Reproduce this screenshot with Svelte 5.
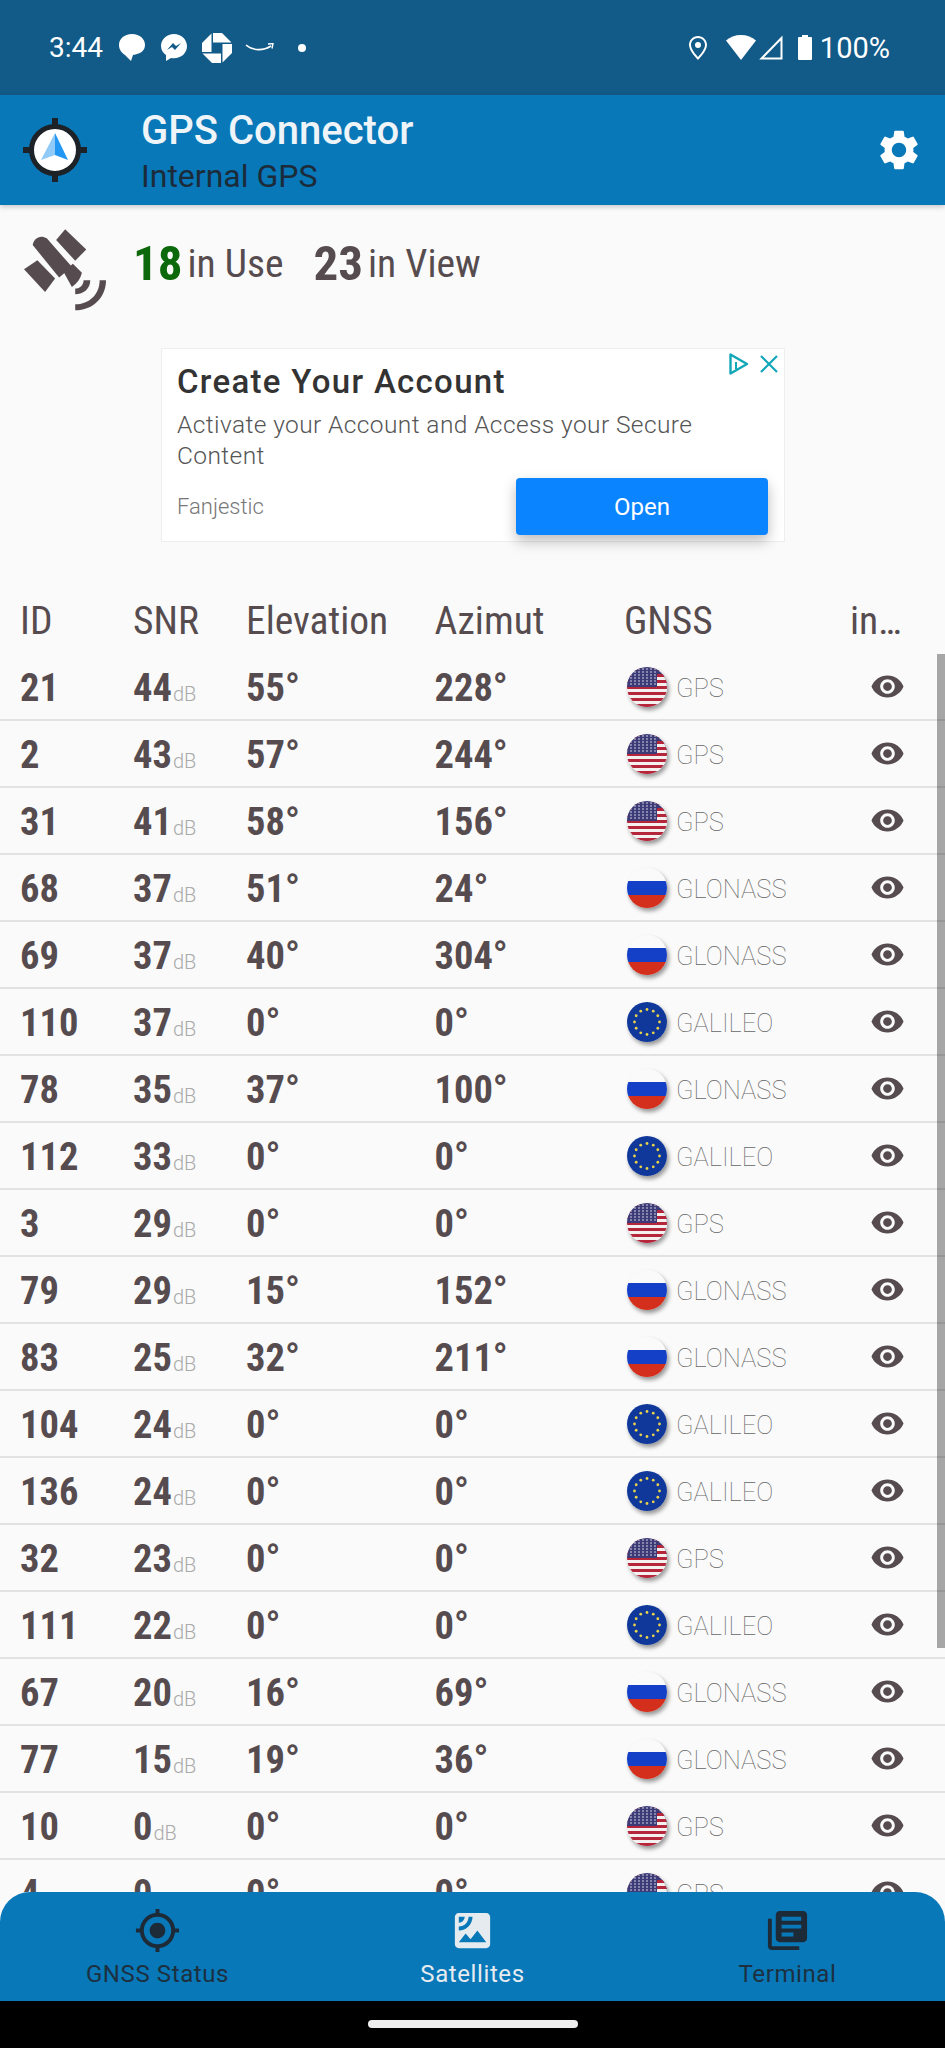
<script>
    const sats = [
        [21, 44, 55, 228, "GPS"],
        [2, 43, 57, 244, "GPS"],
        [31, 41, 58, 156, "GPS"],
        [68, 37, 51, 24, "GLONASS"],
        [69, 37, 40, 304, "GLONASS"],
        [110, 37, 0, 0, "GALILEO"],
        [78, 35, 37, 100, "GLONASS"],
        [112, 33, 0, 0, "GALILEO"],
        [3, 29, 0, 0, "GPS"],
        [79, 29, 15, 152, "GLONASS"],
        [83, 25, 32, 211, "GLONASS"],
        [104, 24, 0, 0, "GALILEO"],
        [136, 24, 0, 0, "GALILEO"],
        [32, 23, 0, 0, "GPS"],
        [111, 22, 0, 0, "GALILEO"],
        [67, 20, 16, 69, "GLONASS"],
        [77, 15, 19, 36, "GLONASS"],
        [10, 0, 0, 0, "GPS"],
        [4, 0, 0, 0, "GPS"],
    ];

    const euStars = Array.from({ length: 12 }, (_, i) => {
        const a = (i * Math.PI) / 6;
        return [20 + 12.5 * Math.cos(a), 20 + 12.5 * Math.sin(a)];
    });
    const usStripes = [0, 6, 12, 18, 24, 30, 36];
</script>

{#snippet flag(system)}
    <svg class="flag" viewBox="0 0 40 40">
        {#if system === "GPS"}
            <rect width="40" height="40" fill="#f4f0f0" />
            {#each usStripes as y}
                <rect x="0" y={y + 1} width="40" height="3" fill="#b5263a" />
            {/each}
            <rect width="40" height="20" fill="#3c3b78" />
            {#each [2, 5, 8, 11, 14, 17] as y}
                {#each [4, 8, 12, 16, 20, 24, 28] as x}
                    <circle cx={x} cy={y} r="0.8" fill="#e6e6f0" />
                {/each}
            {/each}
            <rect x="30" y="7" width="10" height="3" fill="#b5263a" />
            <rect x="30" y="13" width="10" height="3" fill="#b5263a" />
            <rect x="30" y="10" width="10" height="3" fill="#f4f0f0" />
            <rect x="30" y="16" width="10" height="3" fill="#f4f0f0" />
            <rect x="30" y="19" width="10" height="1" fill="#b5263a" />
        {:else if system === "GLONASS"}
            <rect width="40" height="14" fill="#fafafa" />
            <rect y="13" width="40" height="14" fill="#1440c8" />
            <rect y="27" width="40" height="13" fill="#d42f1c" />
        {:else}
            <rect width="40" height="40" fill="#10389a" />
            {#each euStars as [x, y]}
                <circle cx={x} cy={y} r="1.4" fill="#e8d24a" />
            {/each}
        {/if}
    </svg>
{/snippet}

<div class="screen">
    <div class="status">
        <span class="clock">3:44</span>
        <svg class="s-bubble" viewBox="0 0 26 27"><path d="M13 0C5 0 0 5 0 11c0 5 3 8 6 10l6 6 2-6c7-1 12-4 12-10C26 5 21 0 13 0z" fill="#fff" /></svg>
        <svg class="s-msg" viewBox="0 0 26 28"><path d="M13 0C6 0 0 5 0 12c0 4 2 7 5 9v6l5-3c1 .3 2 .3 3 .3 7 0 13-5 13-12S20 0 13 0z" fill="#fff" /><path d="M6 16l6-7 3 3 5-3-6 7-3-3z" fill="#125a87" /></svg>
        <svg class="s-chase" viewBox="0 0 30 30">
            <g fill="#fff">
                <path d="M11 0h9l9.500 9.500H11z" />
                <path d="M11 0h9l9.500 9.500H11z" transform="rotate(90 15 15)" />
                <path d="M11 0h9l9.500 9.500H11z" transform="rotate(180 15 15)" />
                <path d="M11 0h9l9.500 9.500H11z" transform="rotate(270 15 15)" />
            </g>
        </svg>
        <svg class="s-amazon" viewBox="0 0 29 10"><path d="M1 2c7 6 17 6 25 1" fill="none" stroke="#fff" stroke-width="1.6" /><path d="M23 1l5-.5-1 5" fill="none" stroke="#fff" stroke-width="1.4" /></svg>
        <span class="s-dot"></span>
        <span class="grow"></span>
        <svg class="s-pin" viewBox="0 0 18 24"><path fill-rule="evenodd" d="M9 0C4 0 0 4 0 9c0 6 9 15 9 15s9-9 9-15c0-5-4-9-9-9zm0 2c4 0 7 3 7 7 0 4-5 10-7 12-2-2-7-8-7-12 0-4 3-7 7-7zm0 4a3 3 0 1 0 0 6 3 3 0 0 0 0-6z" fill="#fff" /></svg>
        <svg class="s-wifi" viewBox="0 0 30 25"><path d="M15 0C9 0 4 2 0 5.500L15 25 30 5.500C26 2 21 0 15 0z" fill="#fff" /></svg>
        <svg class="s-signal" viewBox="0 0 24 25"><path d="M22.500 3v20.500H2.500z" fill="none" stroke="#fff" stroke-width="2" /></svg>
        <svg class="s-batt" viewBox="0 0 14 25"><path d="M4 0h6v2h3a1 1 0 0 1 1 1v21a1 1 0 0 1-1 1H1a1 1 0 0 1-1-1V3a1 1 0 0 1 1-1h3z" fill="#fff" /></svg>
        <span class="pct">100%</span>
    </div>

    <header class="bar">
        <svg class="logo" viewBox="0 0 70 70">
            <circle cx="35" cy="35" r="23.500" fill="#fff" stroke="#1d2228" stroke-width="5" />
            <path d="M32 3h6v9h-6zM32 58h6v9h-6zM3 32h9v6H3zM58 32h9v6h-9z" fill="#1d2228" />
            <path d="M35 18L21 45l14-5z" fill="#90caf9" />
            <path d="M35 18l13 27-13-5z" fill="#2196f3" />
        </svg>
        <div class="titles">
            <div class="title">GPS Connector</div>
            <div class="subtitle">Internal GPS</div>
        </div>
        <svg class="gear" viewBox="0 0 24 24"><path d="M19.140 12.940c.04-.3.060-.61.060-.94 0-.32-.020-.64-.070-.94l2.030-1.580a.49.49 0 0 0 .12-.61l-1.920-3.320a.488.488 0 0 0-.59-.22l-2.390.96c-.5-.38-1.030-.7-1.620-.94l-.36-2.540a.484.484 0 0 0-.48-.41h-3.840c-.24 0-.43.17-.47.41l-.36 2.540c-.59.24-1.130.57-1.620.94l-2.390-.96c-.22-.08-.47 0-.59.22L2.740 8.870c-.12.21-.08.47.12.61l2.030 1.580c-.05.3-.09.63-.09.94s.020.64.070.94l-2.030 1.580a.49.49 0 0 0-.12.61l1.920 3.320c.12.22.37.29.59.22l2.390-.96c.5.38 1.030.7 1.620.94l.36 2.540c.05.24.24.41.48.41h3.840c.24 0 .44-.17.47-.41l.36-2.540c.59-.24 1.130-.56 1.620-.94l2.390.96c.22.08.47 0 .59-.22l1.920-3.320c.12-.22.070-.47-.12-.61l-2.010-1.580zM12 15.600c-1.980 0-3.600-1.620-3.600-3.600s1.620-3.600 3.600-3.600 3.600 1.620 3.600 3.600-1.620 3.600-3.600 3.600z" fill="#fff" /></svg>
    </header>

    <main class="content">
        <div class="summary">
            <svg class="sat" viewBox="0 0 245 245">
                <g fill="#564c4f">
                    <path d="M123 1l63 60-33 34-57-62z" />
                    <path d="M0 120l40-27 53 55-30 40z" />
                    <path d="M26 48C28 30 48 15 68 28l75 85-38 32z" />
                    <path d="M118 128l28-24 27 27c-4 18-14 32-30 42z" />
                    <path d="M153 178c14 0 25-11 25-25h20c0 25-20 42-45 42z" />
                    <path d="M153 225c42 0 73-30 73-72h19c0 52-40 90-92 90z" />
                </g>
            </svg>
            <b class="in-use">18</b><span class="lbl">in Use</span>
            <b class="in-view">23</b><span class="lbl">in View</span>
        </div>

        <div class="ad">
            <svg class="ad-mark" viewBox="0 0 49 22">
                <path d="M1.500 1.500v19L18 11z" fill="none" stroke="#12a7b8" stroke-width="2.400" stroke-linejoin="round" />
                <path d="M7 9v7" stroke="#12a7b8" stroke-width="2" />
                <path d="M32 3l16 16M48 3L32 19" stroke="#12a7b8" stroke-width="2.200" />
            </svg>
            <div class="ad-title">Create Your Account</div>
            <div class="ad-text">Activate your Account and Access your Secure Content</div>
            <div class="ad-foot">
                <span class="ad-brand">Fanjestic</span>
                <span class="ad-open">Open</span>
            </div>
        </div>

        <div class="head row-grid">
            <span>ID</span>
            <span>SNR</span>
            <span>Elevation</span>
            <span>Azimut</span>
            <span>GNSS</span>
            <span>in…</span>
        </div>

        <div class="list">
            {#each sats as [id, snr, el, az, system]}
                <div class="row row-grid">
                    <b>{id}</b>
                    <span><b>{snr}</b><small>dB</small></span>
                    <b>{el}°</b>
                    <b>{az}°</b>
                    <span class="system">
                        {@render flag(system)}
                        <em>{system}</em>
                    </span>
                    <svg class="eye" viewBox="0 0 24 24"><path d="M12 4.500C7 4.500 2.730 7.610 1 12c1.730 4.390 6 7.500 11 7.500s9.270-3.110 11-7.500c-1.730-4.390-6-7.500-11-7.500zM12 17c-2.760 0-5-2.240-5-5s2.240-5 5-5 5 2.240 5 5-2.240 5-5 5zm0-8c-1.660 0-3 1.340-3 3s1.340 3 3 3 3-1.340 3-3-1.340-3-3-3z" fill="#564c4f" /></svg>
                </div>
            {/each}
            <div class="scrollbar"></div>
        </div>
    </main>

    <nav class="tabs">
        <div class="tab">
            <svg viewBox="0 0 24 24"><path d="M12 8c-2.210 0-4 1.790-4 4s1.790 4 4 4 4-1.790 4-4-1.790-4-4-4zm8.940 3A8.994 8.994 0 0 0 13 3.060V1h-2v2.060A8.994 8.994 0 0 0 3.060 11H1v2h2.060A8.994 8.994 0 0 0 11 20.940V23h2v-2.060A8.994 8.994 0 0 0 20.940 13H23v-2h-2.060zM12 19c-3.870 0-7-3.130-7-7s3.130-7 7-7 7 3.130 7 7-3.130 7-7 7z" fill="#1d2b38" /></svg>
            <span>GNSS Status</span>
        </div>
        <div class="tab active">
            <svg viewBox="0 0 24 24"><path d="M19 3H5c-1.100 0-2 .9-2 2v14c0 1.100.9 2 2 2h14c1.100 0 2-.9 2-2V5c0-1.100-.9-2-2-2zM5 4.990h3C8 6.650 6.650 8 5 8V4.990zM5 12v-2c2.760 0 5-2.250 5-5.010h2C12 8.860 8.870 12 5 12zm0 6l3.500-4.500 2.500 3.010L14.500 12l4.500 6H5z" fill="#e6ebef" /></svg>
            <span>Satellites</span>
        </div>
        <div class="tab">
            <svg viewBox="0 0 24 24"><path d="M4 6H2v14c0 1.100.9 2 2 2h14v-2H4V6zm16-4H8c-1.100 0-2 .9-2 2v12c0 1.100.9 2 2 2h12c1.100 0 2-.9 2-2V4c0-1.100-.9-2-2-2zm-1 9H9V9h10v2zm-4 4H9v-2h6v2zm4-8H9V5h10v2z" fill="#1d2b38" /></svg>
            <span>Terminal</span>
        </div>
    </nav>

    <div class="gesture"><span></span></div>
</div>

<style>
    :global(body) {
        margin: 0;
        background: #fafafa;
    }

    .screen {
        width: 945px;
        height: 2048px;
        display: flex;
        flex-direction: column;
        overflow: hidden;
        font-family: Roboto, "Liberation Sans", sans-serif;
        color: #564c4f;
    }

    /* status bar */
    .status {
        height: 95px;
        flex-shrink: 0;
        box-sizing: border-box;
        padding: 0 55px 0 49px;
        display: flex;
        align-items: center;
        background: #125a87;
        color: #fff;
        font-size: 28px;
    }

    .grow {
        flex-grow: 1;
    }

    .clock {
        width: 70px;
    }

    .s-bubble {
        width: 26px;
        height: 27px;
    }

    .s-msg {
        width: 26px;
        height: 28px;
        margin-left: 16px;
    }

    .s-chase {
        width: 30px;
        height: 30px;
        margin-left: 15px;
    }

    .s-amazon {
        width: 29px;
        height: 10px;
        margin-left: 13px;
    }

    .s-dot {
        width: 8px;
        height: 8px;
        margin-left: 24px;
        border-radius: 50%;
        background: #fff;
    }

    .s-pin {
        width: 18px;
        height: 24px;
    }

    .s-wifi {
        width: 30px;
        height: 25px;
        margin-left: 19px;
    }

    .s-signal {
        width: 24px;
        height: 25px;
        margin-left: 3px;
    }

    .s-batt {
        width: 14px;
        height: 25px;
        margin-left: 15px;
    }

    .pct {
        margin-left: 8px;
        font-size: 29px;
    }

    /* app bar */
    .bar {
        height: 110px;
        flex-shrink: 0;
        display: flex;
        align-items: center;
        background: #0878b9;
        box-shadow: 0 2px 5px #0003;
        position: relative;
    }

    .logo {
        width: 70px;
        height: 70px;
        margin-left: 20px;
    }

    .titles {
        margin-left: 51px;
        padding-top: 3px;
        flex-grow: 1;
    }

    .title {
        font-size: 40px;
        font-weight: 500;
        line-height: 50px;
        color: #eef4f8;
    }

    .subtitle {
        font-size: 32px;
        line-height: 41px;
        color: #1c2b3a;
    }

    .gear {
        width: 48px;
        height: 48px;
        margin-right: 22px;
    }

    /* summary */
    .content {
        flex-grow: 1;
        min-height: 0;
        overflow: hidden;
        background: #fafafa;
    }

    .summary {
        height: 110px;
        box-sizing: border-box;
        padding: 7px 0 0 24px;
        display: flex;
        align-items: center;
        font-family: "Roboto Condensed", "Liberation Sans Narrow", Roboto, sans-serif;
        font-stretch: condensed;
    }

    .sat {
        width: 82px;
        height: 82px;
        margin: 13px 27px 0 0;
    }

    .summary b {
        font-size: 49px;
    }

    .in-use {
        color: #0b680b;
    }

    .in-view {
        margin-left: 30px;
    }

    .lbl {
        margin-left: 5px;
        font-size: 39.500px;
    }

    /* ad */
    .ad {
        position: relative;
        width: 624px;
        height: 194px;
        box-sizing: border-box;
        margin: 33px auto 0 161px;
        padding: 12px 15px 0;
        background: #fff;
        border: 1px solid #eee;
    }

    .ad-mark {
        position: absolute;
        top: 4px;
        right: 6px;
        width: 49px;
        height: 22px;
    }

    .ad-title {
        font-size: 33px;
        font-weight: 500;
        line-height: 42px;
        letter-spacing: 1.300px;
        color: #333;
    }

    .ad-text {
        width: 545px;
        margin-top: 6px;
        font-size: 24.500px;
        font-weight: 300;
        line-height: 31px;
        letter-spacing: 0.400px;
        color: #555;
    }

    .ad-foot {
        display: flex;
        align-items: center;
        justify-content: space-between;
        margin: 7px 1px 0 0;
    }

    .ad-brand {
        font-size: 22px;
        font-weight: 300;
        color: #777;
    }

    .ad-open {
        width: 252px;
        height: 57px;
        display: flex;
        align-items: center;
        justify-content: center;
        background: #0a84ff;
        border-radius: 4px;
        box-shadow: 0 6px 14px #0004;
        color: #fff;
        font-size: 24px;
    }

    /* table */
    .row-grid {
        display: grid;
        grid-template-columns: 113px 113px 188.500px 189.500px 226px 1fr;
        padding-left: 20px;
        align-items: center;
        font-family: "Roboto Condensed", "Liberation Sans Narrow", Roboto, sans-serif;
        font-stretch: condensed;
    }

    .head {
        height: 112px;
        padding-top: 44px;
        box-sizing: border-box;
        font-size: 39.500px;
    }

    .list {
        position: relative;
    }

    .row {
        height: 67px;
        box-sizing: border-box;
        padding-top: 2px;
        border-bottom: 2px solid #e2e2e2;
        font-size: 38.500px;
    }

    .row b {
        font-weight: 700;
    }

    .row small {
        margin-left: 1px;
        font-family: Roboto, sans-serif;
        font-stretch: normal;
        font-size: 20px;
        font-weight: 300;
        color: #aaa;
    }

    .system {
        display: flex;
        align-items: center;
    }

    .flag {
        width: 40px;
        height: 40px;
        margin: -2px 0 0 3px;
        border-radius: 50%;
        box-shadow: 2px 3px 4px #0006;
    }

    .system em {
        margin-left: 9px;
        font-family: Roboto, sans-serif;
        font-stretch: normal;
        font-style: normal;
        font-size: 25.500px;
        font-weight: 100;
        color: #666;
    }

    .eye {
        width: 35px;
        height: 35px;
        margin: -2px 0 0 20px;
    }

    .scrollbar {
        position: absolute;
        top: 0;
        right: 0;
        width: 8px;
        height: 994px;
        background: #0005;
    }

    /* bottom navigation */
    .tabs {
        height: 109px;
        flex-shrink: 0;
        display: grid;
        grid-template-columns: repeat(3, 1fr);
        background: #0878b9;
        border-radius: 30px 30px 0 0;
    }

    .tab {
        display: flex;
        flex-direction: column;
        align-items: center;
        padding-top: 15px;
        font-size: 24px;
        letter-spacing: 0.600px;
        color: #1c3040;
    }

    .tab svg {
        width: 47px;
        height: 47px;
    }

    .tab span {
        margin-top: 6px;
    }

    .active {
        color: #e6ebef;
    }

    .gesture {
        height: 47px;
        flex-shrink: 0;
        display: flex;
        justify-content: center;
        padding-top: 19px;
        box-sizing: border-box;
        background: #000;
    }

    .gesture span {
        width: 210px;
        height: 8px;
        border-radius: 4px;
        background: #eee;
    }
</style>
